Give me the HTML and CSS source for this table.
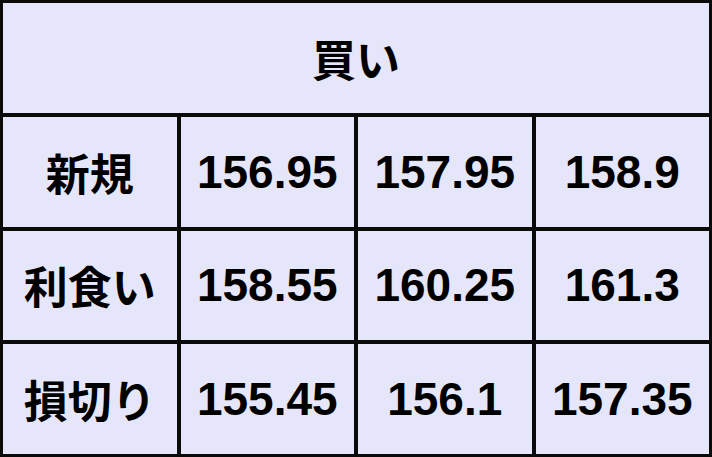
FILE: index.html
```html
<!DOCTYPE html>
<html lang="ja">
<head>
<meta charset="utf-8">
<title>買い</title>
<link rel="stylesheet" href="styles.css">
</head>
<body>
<div class="grid">
  <div class="cell head">買い</div>
  <div class="cell label">新規</div>
  <div class="cell">156.95</div>
  <div class="cell">157.95</div>
  <div class="cell">158.9</div>
  <div class="cell label">利食い</div>
  <div class="cell">158.55</div>
  <div class="cell">160.25</div>
  <div class="cell">161.3</div>
  <div class="cell label">損切り</div>
  <div class="cell">155.45</div>
  <div class="cell">156.1</div>
  <div class="cell">157.35</div>
</div>
</body>
</html>
```

FILE: styles.css
```css
html, body {
  margin: 0;
  padding: 0;
  background: #ffffff;
}
.grid {
  box-sizing: border-box;
  width: 712px;
  height: 457px;
  padding: 3px;
  background: #0a0a0a;
  display: grid;
  grid-template-columns: repeat(4, 1fr);
  grid-template-rows: repeat(4, 1fr);
  gap: 4px;
  font-family: "Liberation Sans", Arial, "Noto Sans CJK JP", sans-serif;
  font-weight: bold;
  font-size: 46px;
  color: #000;
}
.cell {
  background: #e6e6fa;
  display: flex;
  align-items: center;
  justify-content: center;
  line-height: 1;
}
.head {
  grid-column: 1 / 5;
}
.head, .label {
  font-family: "Noto Sans CJK JP", sans-serif;
  font-size: 44px;
}
```
